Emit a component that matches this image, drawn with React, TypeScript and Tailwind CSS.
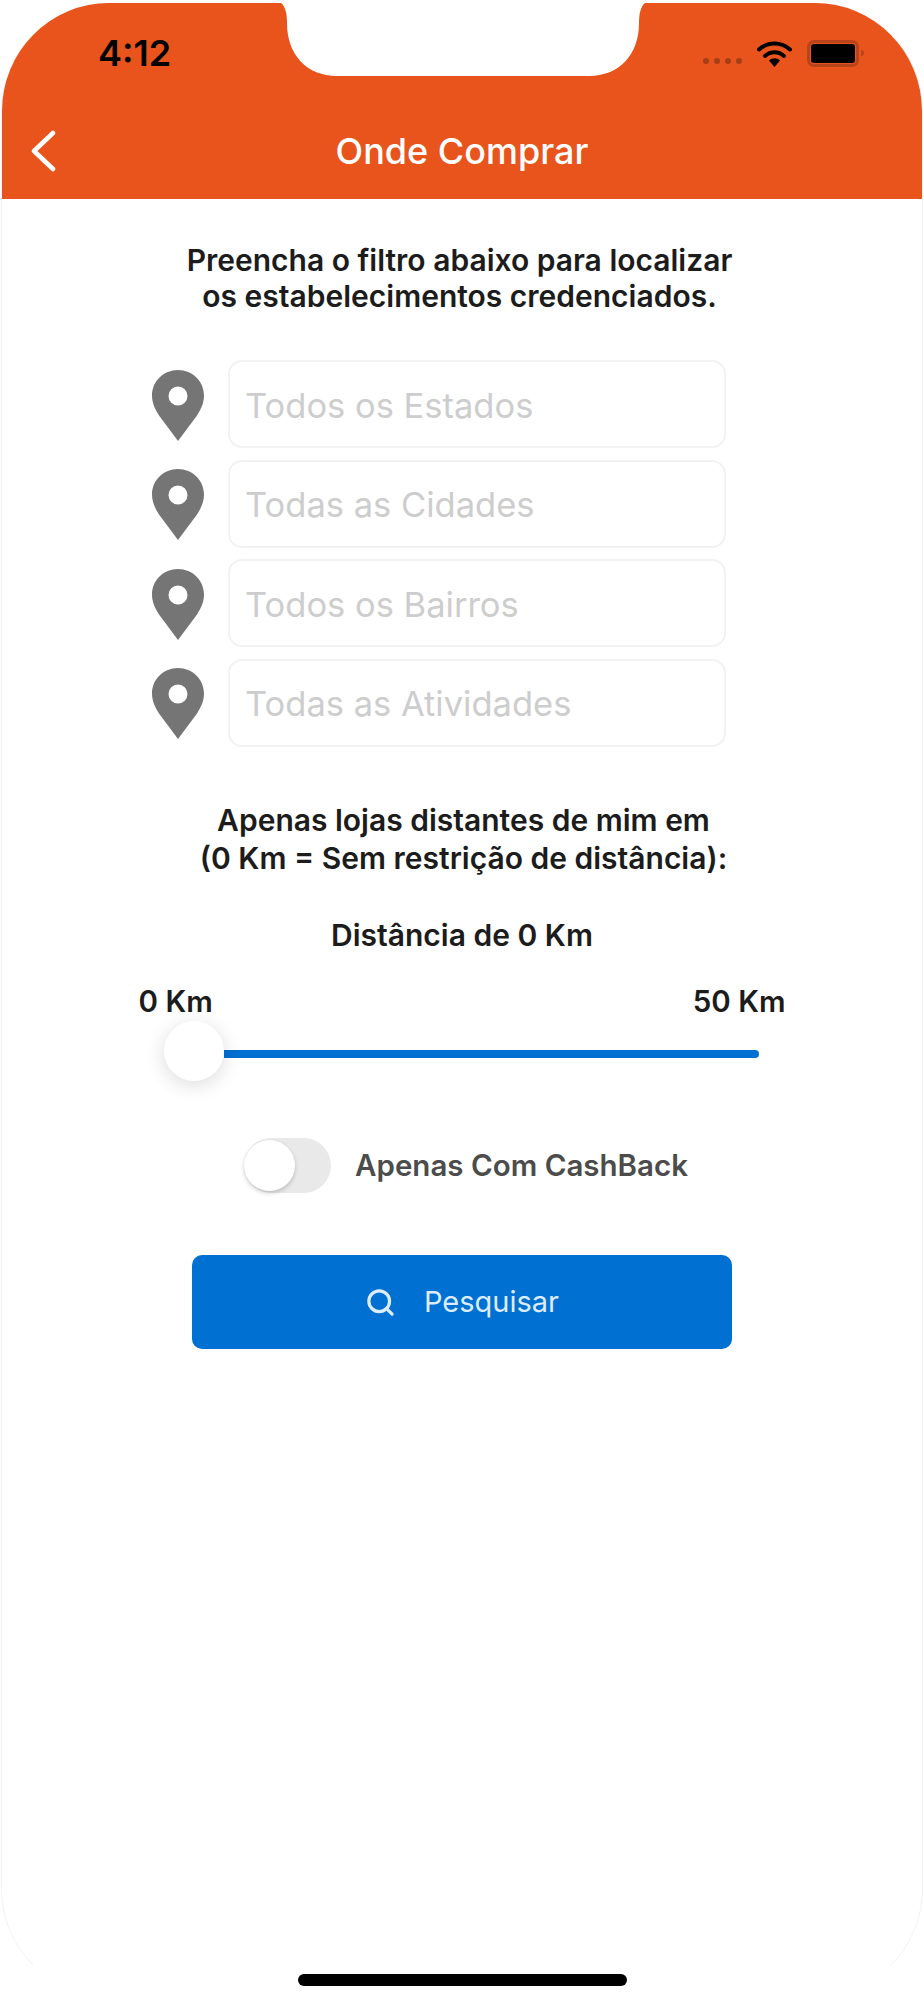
import { Search } from "lucide-react";

const filters = [
  "Todos os Estados",
  "Todas as Cidades",
  "Todos os Bairros",
  "Todas as Atividades",
];

function Pin() {
  return (
    <svg viewBox="0 0 52 71" className="mt-[2px] h-[71px] w-[52px] shrink-0">
      <path
        fill="#757575"
        fillRule="evenodd"
        d="M26 0C11.6 0 0 11.4 0 25.6 0 33 3 39.4 7 45.4L26 71l19-25.600c4-6 7-12.400 7-19.800C52 11.400 40.400 0 26 0Zm0 16.500a9.500 9.500 0 1 1 0 19 9.500 9.500 0 0 1 0-19Z"
      />
    </svg>
  );
}

function StatusBar() {
  return (
    <div className="flex h-[64px] items-center justify-between pl-[96px] pr-[58px] pt-[10px]">
      <span className="text-[36px] font-semibold leading-none text-black">4:12</span>
      <div className="flex items-center">
        {/* signal dots */}
        <div className="mr-[15px] mt-[16px] flex gap-[5px]">
          <span className="h-[6px] w-[6px] rounded-full bg-[#a83e16]" />
          <span className="h-[6px] w-[6px] rounded-full bg-[#a83e16]" />
          <span className="h-[6px] w-[6px] rounded-full bg-[#a83e16]" />
          <span className="h-[6px] w-[6px] rounded-full bg-[#a83e16]" />
        </div>
        <svg viewBox="0 0 35 27" className="h-[27px] w-[35px]">
          <path d="M2 9.500C11 1.500 24 1.500 33 9.500" fill="none" stroke="#000" strokeWidth="4" strokeLinecap="round" />
          <path d="M8 16C13.500 11 21.500 11 27 16" fill="none" stroke="#000" strokeWidth="4" strokeLinecap="round" />
          <path d="M12 20.500C15.500 17.500 19.500 17.500 23 20.500L17.500 27Z" fill="#000" />
        </svg>
        <div className="ml-[15px] flex items-center">
          <div className="rounded-[7px] border-[3px] border-[#b8441a] p-[1px]">
            <div className="h-[19px] w-[44px] rounded-[3px] bg-black" />
          </div>
          <div className="ml-[2px] h-[6px] w-[3px] rounded-r-full bg-[#b8441a]" />
        </div>
      </div>
    </div>
  );
}

export default function App() {
  return (
    <div className="h-[2000px] w-[924px] bg-white pt-[3px] [font-family:Inter,sans-serif]">
      <div className="relative mx-[1px] h-[1994px] overflow-hidden rounded-[108px] border-x border-b border-[#f3f3f3] border-b-transparent">
        {/* notch */}
        <svg viewBox="0 0 368 74" className="absolute left-[277px] top-0 h-[74px] w-[368px]">
          <path fill="#fff" d="M2 0C6 3 8 10 8 20 8 52 28 73 58 73H310C340 73 360 52 360 20 360 10 362 3 366 0Z" />
        </svg>

        <header className="h-[196px] bg-[#e8541c] pt-[13px]">
          <StatusBar />
          <div className="relative mt-[49px] flex h-[44px] items-center justify-center">
            <svg viewBox="0 0 26 42" className="absolute left-[28px] top-[1px] h-[42px] w-[26px]">
              <path d="M23 3 4 21l19 18" fill="none" stroke="#fff" strokeWidth="4.500" strokeLinecap="round" strokeLinejoin="round" />
            </svg>
            <h1 className="text-[36px] font-medium text-white">Onde Comprar</h1>
          </div>
        </header>

        <main className="flex flex-col items-center pt-[43px]">
          <p className="mr-[5px] text-center text-[30px] font-semibold leading-[36px] text-[#1c1c1c]">
            Preencha o filtro abaixo para localizar
            <br />
            os estabelecimentos credenciados.
          </p>

          <div className="mr-[46px] mt-[46px] flex w-[574px] flex-col gap-[11.500px]">
            {filters.map((label) => (
              <div key={label} className="flex items-center gap-[24px]">
                <Pin />
                <div className="flex h-[88px] flex-1 items-center rounded-[14px] border-2 border-[#f2f2f2] pl-[15px] pt-[3px] text-[34.500px] text-[#cdcdcd]">
                  {label}
                </div>
              </div>
            ))}
          </div>

          <p className="ml-[3px] mt-[54px] text-center text-[30px] font-semibold leading-[38px] text-[#1c1c1c]">
            Apenas lojas distantes de mim em
            <br />
            (0 Km = Sem restrição de distância):
          </p>

          <p className="mt-[39px] text-[30px] font-semibold leading-[38px] text-[#1c1c1c]">Distância de 0 Km</p>

          <div className="mt-[28px] flex w-[647px] justify-between text-[29.500px] font-semibold leading-[38px] text-[#1c1c1c]">
            <span>0 Km</span>
            <span>50 Km</span>
          </div>

          {/* slider */}
          <div className="mt-[4px] flex h-[60px] w-[594px] items-center">
            <div className="z-10 -ml-[1px] -mt-[5px] h-[60px] w-[60px] shrink-0 rounded-full bg-white shadow-[0_4px_20px_rgba(0,0,0,0.14)]" />
            <div className="h-[8px] flex-1 rounded-r-full bg-[#0070d2]" />
          </div>

          {/* cashback toggle */}
          <div className="ml-[8px] mt-[54px] flex items-center gap-[24px]">
            <div className="flex h-[55px] w-[87px] items-center rounded-full bg-[#e9e9e9]">
              <div className="h-[51px] w-[51px] rounded-full bg-white shadow-[0_2px_4px_rgba(0,0,0,0.2)]" />
            </div>
            <span className="text-[29.500px] font-semibold text-[#4c4c4c]">Apenas Com CashBack</span>
          </div>

          <button className="mt-[62px] flex h-[94px] w-[540px] items-center justify-center gap-[28px] rounded-[10px] bg-[#0070d2] pt-[1px] text-[29px] text-[#dcecfa]">
            <Search size={31} strokeWidth={2.500} />
            Pesquisar
          </button>
        </main>

        {/* home indicator */}
        <div className="absolute bottom-[10px] left-[296px] h-[12px] w-[329px] rounded-full bg-black" />
      </div>
    </div>
  );
}
